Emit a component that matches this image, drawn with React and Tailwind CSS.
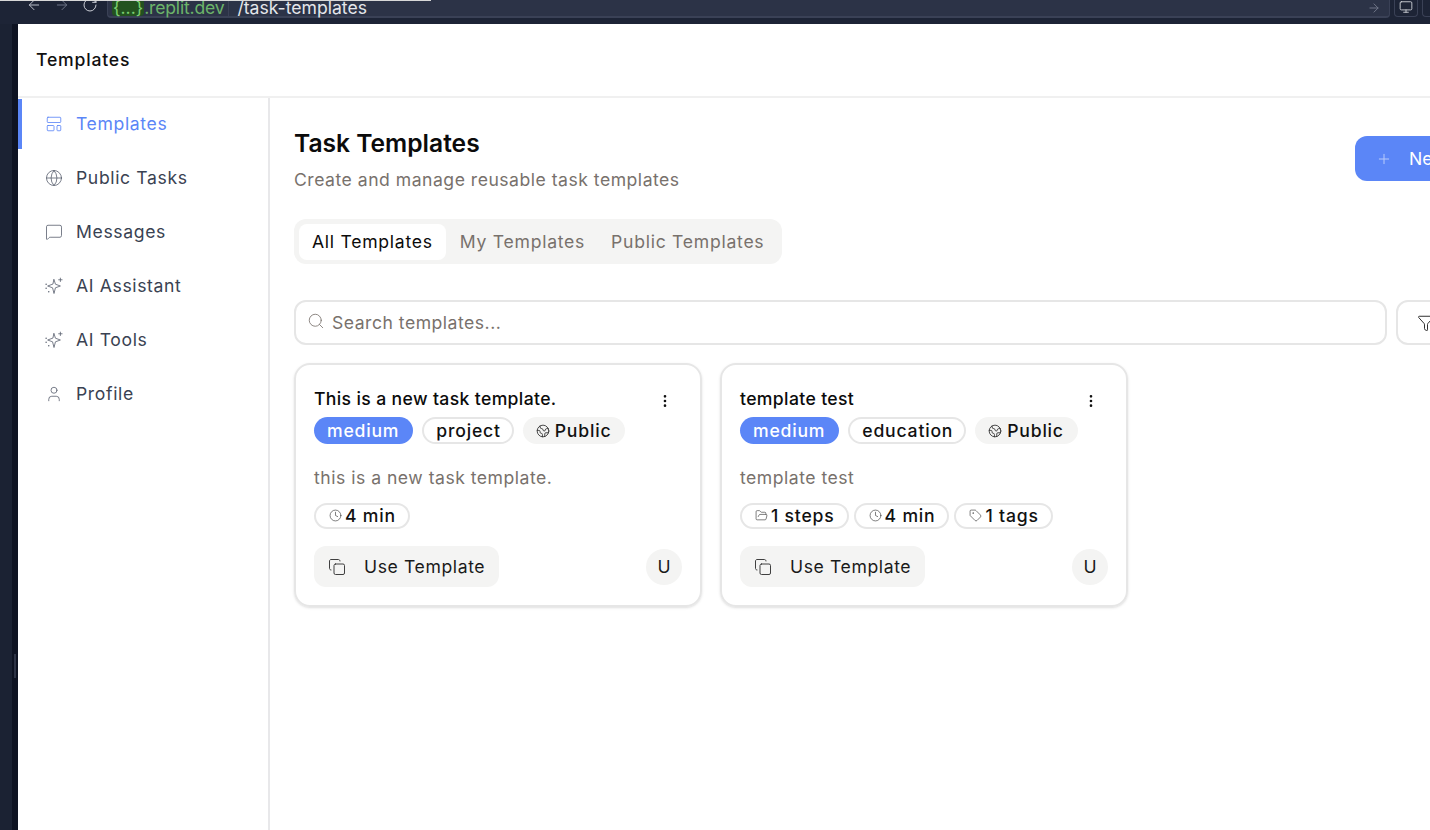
import { ArrowLeft, ArrowRight, Clock, Copy, Earth, EllipsisVertical, Filter, FolderOpen, Globe, LayoutTemplate, MessageSquare, Monitor, Plus, RotateCw, Search, Tag, User } from 'lucide-react';

// outlined star with a small plus and dots, like the reference's sidebar icon
function SparkIcon({ className, strokeWidth }) {
  return (
    <svg viewBox="0 0 24 24" fill="none" stroke="currentColor" strokeWidth={strokeWidth} strokeLinecap="round" strokeLinejoin="round" className={className}>
      <path d="M12 3.5l1.9 6.1L20.5 12l-6.6 2.4L12 22l-1.9-7.6L3.5 12l6.6-2.4z" />
      <path d="M20.5 1.5v4.5M18.2 3.7h4.6" />
      <path d="M1.5 9.5h.01M1.5 15h.01M5 19.5h.01" strokeWidth={2} />
    </svg>
  );
}

const navItems = [
  { label: 'Templates', icon: LayoutTemplate, active: true },
  { label: 'Public Tasks', icon: Globe },
  { label: 'Messages', icon: MessageSquare },
  { label: 'AI Assistant', icon: SparkIcon },
  { label: 'AI Tools', icon: SparkIcon },
  { label: 'Profile', icon: User },
];

const templates = [
  {
    title: 'This is a new task template.',
    category: 'project',
    description: 'this is a new task template.',
    meta: [{ icon: Clock, label: '4 min' }],
  },
  {
    title: 'template test',
    category: 'education',
    description: 'template test',
    meta: [
      { icon: FolderOpen, label: '1 steps' },
      { icon: Clock, label: '4 min' },
      { icon: Tag, label: '1 tags' },
    ],
  },
];

function BrowserBar() {
  return (
    <div className="flex h-6 shrink-0 bg-[#1d2436] relative overflow-hidden">
      <div className="absolute left-0 top-0 w-[431px] h-px bg-[#d8d8d8]" />
      <div className="w-[26px] shrink-0" />
      <div className="flex items-start gap-[12px] w-[81px] shrink-0 -mt-[3px]">
        <ArrowLeft className="w-4 h-4 text-[#b9bdc8]" strokeWidth={1.5} />
        <ArrowRight className="w-4 h-4 text-[#6d7385]" strokeWidth={1.5} />
        <RotateCw className="w-4 h-4 text-[#c9ccd4]" strokeWidth={1.5} />
      </div>
      <div className="flex items-end h-[18px] w-[1283px] shrink-0 bg-[#2c3347] border-l border-b-2 border-r border-[#3a4156] rounded-b pl-1 text-[17.6px] leading-[17px]">
        <span className="bg-[#23521f] text-[#7ccf6f] rounded-sm px-px">{'{...}'}</span>
        <span className="text-[#6cb56a] pr-1 border-r border-[#3a4156] tracking-[-0.2px]">.replit.dev</span>
        <span className="text-[#e4e6eb] ml-[8px]">/task-templates</span>
        <ArrowRight className="ml-auto mr-2 mb-px w-3.5 h-3.5 text-[#777d8e]" strokeWidth={1.5} />
      </div>
      <div className="flex items-start justify-center w-[24px] h-[17px] ml-1 border-x border-b border-[#3a4156] rounded-b shrink-0">
        <Monitor className="w-3.5 h-3.5 text-[#d5d7dd]" strokeWidth={1.5} />
      </div>
      <div className="w-4 h-[17px] ml-[4px] border-l border-b border-[#3a4156] rounded-bl shrink-0" />
    </div>
  );
}

function Sidebar() {
  return (
    <aside className="w-[252px] shrink-0 border-r-2 border-[#e8e8ea] pt-px">
      {navItems.map((item) => (
        <div
          key={item.label}
          className={`flex items-center h-[50px] mb-1 pl-[23px] gap-[13px] border-l-4 ${
            item.active ? 'border-[#5b86f7] text-[#5b86f7]' : 'border-transparent text-[#3a4252]'
          }`}
        >
          <item.icon className={`w-[18px] h-[18px] ${item.active ? '' : 'text-[#5d6472]'}`} strokeWidth={1.1} />
          <span className="text-[17.6px] tracking-[0.63px] leading-none">{item.label}</span>
        </div>
      ))}
    </aside>
  );
}

function TemplateCard({ template }) {
  return (
    <div className="w-[408px] h-[244px] shrink-0 rounded-2xl border-2 border-[#e6e6e6] px-[18px] pt-[22px] shadow-sm">
      <div className="flex justify-between items-start">
        <h3 className="text-[17.6px] leading-[24px] tracking-[0.36px] font-medium text-[#0b0b0b]">{template.title}</h3>
        <EllipsisVertical className="w-4 h-4 mt-[6px] mr-[9px] text-[#111]" strokeWidth={2} />
      </div>
      <div className="flex gap-[9px] mt-[6px]">
        <span className="h-[27px] pl-[13px] pr-[14px] rounded-full bg-[#5b86f7] text-white text-[17.6px] tracking-[0.8px] font-medium leading-[27px]">medium</span>
        <span className="h-[27px] pl-[12px] pr-[11px] rounded-full border-2 border-[#e6e6e6] text-[#111] text-[17.6px] tracking-[0.8px] font-medium leading-[23px]">{template.category}</span>
        <span className="flex items-center gap-[5px] h-[27px] pl-[13px] pr-[14px] pt-px rounded-full bg-[#f4f4f3] text-[#111] text-[17.6px] tracking-[0.8px] font-medium">
          <Earth className="w-[14px] h-[14px] -mt-px text-[#333]" strokeWidth={1.5} />
          Public
        </span>
      </div>
      <p className="mt-[22px] text-[17.6px] leading-[24px] tracking-[0.5px] text-[#78716c]">{template.description}</p>
      <div className="flex gap-[5px] mt-[13px]">
        {template.meta.map((m) => (
          <span key={m.label} className="flex items-center gap-[3px] h-[26px] pl-[13px] pr-[12px] rounded-full border-2 border-[#e6e6e6] text-[#111] text-[17.6px] tracking-[0.8px] font-medium">
            <m.icon className="w-[13px] h-[13px] -mt-px text-[#444]" strokeWidth={1.25} />
            {m.label}
          </span>
        ))}
      </div>
      <div className="flex items-center justify-between mt-[17px]">
        <button className="flex items-center gap-[18px] h-[41px] px-[14px] pt-px rounded-xl bg-[#f4f4f3] text-[#1a1a1a] text-[17.6px] tracking-[0.6px]">
          <Copy className="w-[18px] h-[18px] text-[#333]" strokeWidth={1.25} />
          Use Template
        </button>
        <div className="flex items-center justify-center w-9 h-9 pt-px rounded-full bg-[#f4f4f3] text-[#1a1a1a] text-[17.6px]">U</div>
      </div>
    </div>
  );
}

export default function App() {
  return (
    <div className="flex flex-col w-[1430px] h-[830px] overflow-hidden bg-white font-['Inter',sans-serif]">
      <BrowserBar />
      <div className="flex flex-1 min-h-0 relative">
        <div className="flex shrink-0 w-[18px]">
          <div className="w-3 bg-[#1b2233]" />
          <div className="w-1.5 bg-[#0e1322]" />
        </div>
        <div className="absolute left-[14px] top-[630px] w-0.5 h-6 bg-[#2e3446]" />
        <div className="flex flex-col flex-1 min-w-0">
          <header className="flex items-center h-[74px] shrink-0 pl-[18px] pt-px border-b-2 border-[#f0f0f0]">
            <span className="text-[17.6px] tracking-[0.8px] font-medium text-[#111]">Templates</span>
          </header>
          <div className="flex flex-1 min-h-0">
            <Sidebar />
            <main className="pl-6 pt-[30px] w-[1220px] shrink-0">
              <div className="flex justify-between items-start">
                <div>
                  <h1 className="text-[24.6px] leading-[30px] font-semibold text-[#0b0b0b]">Task Templates</h1>
                  <p className="mt-[10px] text-[17.6px] leading-[24px] tracking-[0.5px] text-[#78716c]">Create and manage reusable task templates</p>
                </div>
                <button className="flex items-center gap-[17px] h-[45px] w-[135px] mt-[8px] pl-[21px] pt-px rounded-xl bg-[#5b86f7] text-white text-[17.6px] whitespace-nowrap">
                  <Plus className="w-4 h-4 text-[#b9cbfb]" strokeWidth={1.5} />
                  New
                </button>
              </div>
              <div className="flex w-fit items-center gap-[1px] h-[45px] pl-[5px] pr-[5px] pt-px mt-[27px] rounded-xl bg-[#f4f4f3] text-[17.6px] tracking-[0.73px]">
                <span className="flex items-center h-9 px-[13px] rounded-lg bg-white text-[#0b0b0b]">All Templates</span>
                <span className="pl-[13px] pr-[12px] text-[#78716c]">My Templates</span>
                <span className="px-[13px] text-[#78716c]">Public Templates</span>
              </div>
              <div className="flex gap-[9px] mt-[36px]">
                <div className="flex items-center w-[1093px] shrink-0 h-[45px] pl-[11px] pt-px rounded-xl border-2 border-[#e6e6e6]">
                  <Search className="w-[18px] h-[18px] -mt-1 text-[#78716c]" strokeWidth={1.1} />
                  <span className="ml-[7px] text-[17.6px] tracking-[0.5px] text-[#78716c]">Search templates...</span>
                </div>
                <div className="flex items-center w-[100px] shrink-0 h-[45px] pl-[19px] rounded-xl border-2 border-[#e6e6e6]">
                  <Filter className="w-[18px] h-[18px] text-[#222]" strokeWidth={1.25} />
                </div>
              </div>
              <div className="flex gap-[18px] mt-[18px]">
                {templates.map((t) => (
                  <TemplateCard key={t.title} template={t} />
                ))}
              </div>
            </main>
          </div>
        </div>
      </div>
    </div>
  );
}
